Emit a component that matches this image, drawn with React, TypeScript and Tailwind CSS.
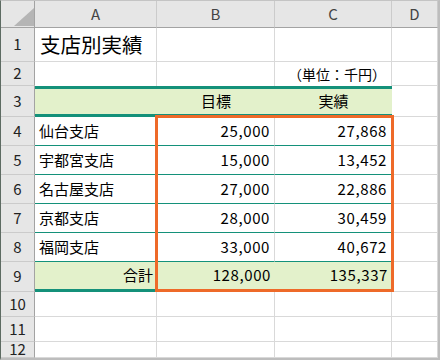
import React from "react";

type Row = {
  name: string;
  target: string;
  actual: string;
};

const rows: Row[] = [
  { name: "仙台支店", target: "25,000", actual: "27,868" },
  { name: "宇都宮支店", target: "15,000", actual: "13,452" },
  { name: "名古屋支店", target: "27,000", actual: "22,886" },
  { name: "京都支店", target: "28,000", actual: "30,459" },
  { name: "福岡支店", target: "33,000", actual: "40,672" },
];

const colHead = "flex items-center justify-center bg-[#e6e6e6] border-r border-b border-r-[#cbcbcb] border-b-[#a3a3a3] text-[15px] text-[#444]";
const rowHead = "flex items-center justify-center bg-[#e6e6e6] border-r border-b border-r-[#a3a3a3] border-b-[#cbcbcb] text-[15px] text-[#222]";
const plain = "border-r border-b border-[#d9d9d9]";
const dataRow = "flex items-center border-b border-b-[#14917a] border-r border-r-[#d9d9d9] text-[15px]";
const sumCell = "flex items-center bg-[#e3f1cb] border-b-[3px] border-b-[#14917a] text-[15px]";
const headCell = "flex items-center justify-center bg-[#e3f1cb] border-y-[3px] border-[#14917a] text-[15px]";
const num = "justify-end pr-[4px] tracking-[0.6px]";

const RowNum = ({ n }: { n: number }) => <div className={rowHead}>{n}</div>;

export default function App() {
  return (
    <div className="relative grid h-[360px] w-[440px] grid-cols-[34px_122px_118px_117px_46px] grid-rows-[27px_34px_24px_31px_29px_29px_29px_29px_29px_30px_25px_25px_16px] overflow-hidden border-t border-l border-r-2 border-b-2 border-t-[#c4c4c4] border-l-[#5d6b62] border-r-[#bdbdbd] border-b-[#bdbdbd] bg-white font-['Noto_Sans_CJK_JP','Noto_Sans',sans-serif] text-black">
      {/* column headers */}
      <div className="relative bg-[#e6e6e6] border-r border-b border-[#a3a3a3]">
        <svg className="absolute left-[13px] top-[7px]" width="20" height="18" viewBox="0 0 20 18">
          <polygon points="20,0 20,18 0,18" fill="#b5b5b5" />
        </svg>
      </div>
      <div className={colHead}>A</div>
      <div className={colHead}>B</div>
      <div className={colHead}>C</div>
      <div className={colHead}>D</div>

      {/* 1 */}
      <RowNum n={1} />
      <div className={`${plain} flex items-center pl-[5px] text-[20.5px]`}>支店別実績</div>
      <div className={plain} />
      <div className={plain} />
      <div className={plain} />

      {/* 2 */}
      <RowNum n={2} />
      <div className="border-r border-[#d9d9d9]" />
      <div className="border-r border-[#d9d9d9]" />
      <div className="flex items-center justify-end border-r border-[#d9d9d9] pr-[5px] text-[14px]">（単位：千円）</div>
      <div className={plain} />

      {/* 3 */}
      <RowNum n={3} />
      <div className={headCell} />
      <div className={headCell}>目標</div>
      <div className={headCell}>実績</div>
      <div className={plain} />

      {rows.map((r, i) => (
        <React.Fragment key={r.name}>
          <RowNum n={i + 4} />
          <div className={`${dataRow} pl-[4px]`}>{r.name}</div>
          <div className={`${dataRow} ${num}`}>{r.target}</div>
          <div className={`${dataRow} ${num}`}>{r.actual}</div>
          <div className={plain} />
        </React.Fragment>
      ))}

      {/* 9 */}
      <RowNum n={9} />
      <div className={`${sumCell} justify-end pr-[4px]`}>合計</div>
      <div className={`${sumCell} ${num}`}>128,000</div>
      <div className={`${sumCell} ${num}`}>135,337</div>
      <div className={plain} />

      {[10, 11, 12].map((n) => (
        <React.Fragment key={n}>
          <RowNum n={n} />
          <div className={plain} />
          <div className={plain} />
          <div className={plain} />
          <div className={plain} />
        </React.Fragment>
      ))}

      {/* selected range outline */}
      <div className="pointer-events-none absolute left-[154px] top-[114px] h-[177px] w-[239px] border-[3px] border-[#ee6a29]" />
    </div>
  );
}
